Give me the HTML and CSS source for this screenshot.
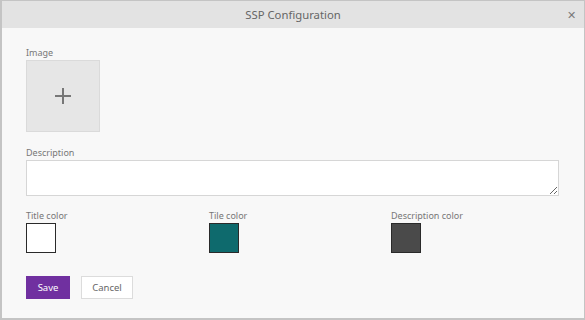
FILE: index.html
```html
<!DOCTYPE html>
<html>
<head>
<meta charset="utf-8">
<link rel="stylesheet" href="styles.css">
</head>
<body>
<div class="dialog">
  <div class="header">
    <span class="title">SSP Configuration</span>
    <span class="close">&#x2715;</span>
  </div>
  <div class="content">
    <div class="label">Image</div>
    <div class="image-box">
      <svg width="18" height="18" viewBox="0 0 18 18"><path d="M9 1V17M1 9H17" stroke="#777" stroke-width="2" fill="none"/></svg>
    </div>
    <div class="label label-desc">Description</div>
    <textarea class="desc"></textarea>
    <div class="colors">
      <div class="color-field">
        <div class="label">Title color</div>
        <div class="swatch swatch-white"></div>
      </div>
      <div class="color-field">
        <div class="label">Tile color</div>
        <div class="swatch swatch-teal"></div>
      </div>
      <div class="color-field">
        <div class="label">Description color</div>
        <div class="swatch swatch-gray"></div>
      </div>
    </div>
    <div class="buttons">
      <button class="btn btn-save">Save</button>
      <button class="btn btn-cancel">Cancel</button>
    </div>
  </div>
</div>
</body>
</html>
```
FILE: styles.css
```css
html, body {
  margin: 0;
  padding: 0;
  width: 585px;
  height: 320px;
  overflow: hidden;
  background: #ffffff;
}
body {
  font-family: "Segoe UI", "Noto Sans", "Open Sans", sans-serif;
  color: #666;
}
.dialog {
  box-sizing: border-box;
  width: 585px;
  height: 320px;
  border: 1px solid #c4c4c4;
  border-left-width: 2px;
  border-bottom-width: 2px;
  background: #f8f8f8;
  display: flex;
  flex-direction: column;
}
.header {
  height: 27px;
  background: #e3e3e3;
  display: flex;
  align-items: center;
  justify-content: center;
  position: relative;
}
.title {
  font-size: 11.3px;
  color: #666;
}
.close {
  position: absolute;
  right: 8px;
  top: 7px;
  font-size: 11px;
  color: #7a7a7a;
  line-height: 14px;
}
.content {
  padding: 19px 0 0 24px;
  display: flex;
  flex-direction: column;
  align-items: flex-start;
}
.label {
  font-size: 9px;
  line-height: 12px;
  height: 12px;
  margin-bottom: 1px;
  color: #777;
}
.image-box {
  box-sizing: border-box;
  width: 74px;
  height: 72px;
  background: #e6e6e6;
  border: 1px solid #dadada;
  display: flex;
  align-items: center;
  justify-content: center;
}
.label-desc {
  margin-top: 15px;
}
.desc {
  box-sizing: border-box;
  width: 533px;
  height: 36px;
  margin: 0;
  border: 1px solid #d6d6d6;
  background: #fff;
  resize: vertical;
}
.colors {
  margin-top: 14px;
  display: grid;
  grid-template-columns: 183px 182px 150px;
}
.swatch {
  box-sizing: border-box;
  width: 30px;
  height: 30px;
  border: 1px solid #2a2a2a;
}
.swatch-white { background: #ffffff; }
.swatch-teal { background: #0e6a6d; }
.swatch-gray { background: #4a4a4a; }
.buttons {
  margin-top: 23px;
  display: flex;
  gap: 11px;
}
.btn {
  box-sizing: border-box;
  height: 23px;
  font-family: inherit;
  font-size: 9.5px;
  padding: 0;
  margin: 0;
  cursor: pointer;
}
.btn-save {
  width: 44px;
  background: #7030a0;
  color: #fff;
  border: 1px solid #7030a0;
}
.btn-cancel {
  width: 52px;
  background: #fff;
  color: #666;
  border: 1px solid #dcdcdc;
}
```
